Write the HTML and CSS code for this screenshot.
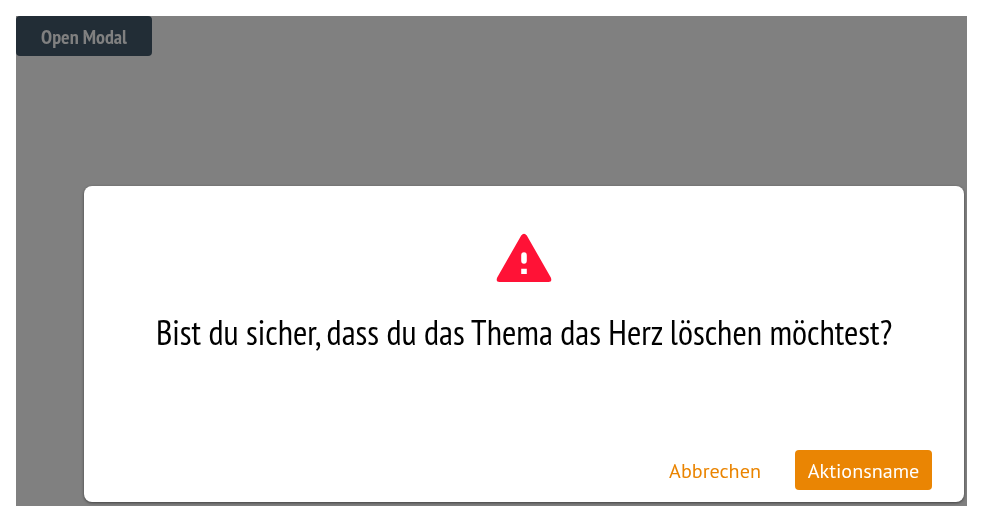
FILE: index.html
```html
<!DOCTYPE html>
<html lang="de">
<head>
<meta charset="utf-8">
<title>Modal</title>
<link rel="stylesheet" href="styles.css">
</head>
<body>
<main class="stage">
  <button class="open">Open Modal</button>
  <section class="modal" role="dialog">
    <svg class="warning" viewBox="0 0 56 50" aria-hidden="true">
      <path fill="#ff1236" fill-rule="evenodd" d="M25.2 2.6Q28-1.2 30.8 2.6L54.8 44.6Q56.5 49 52.5 49H3.5Q-.5 49 1.2 44.6ZM25.2 22.5V27.500a2.800 3.300 0 0 0 5.600 0V22.500a2.800 3.300 0 0 0-5.600 0ZM25.200 35.800V41H30.800V35.800Z"/>
    </svg>
    <h1 class="title">Bist du sicher, dass du das Thema das Herz löschen möchtest?</h1>
    <div class="actions">
      <button class="cancel">Abbrechen</button>
      <button class="action">Aktionsname</button>
    </div>
  </section>
</main>
</body>
</html>
```
FILE: styles.css
```css
* { box-sizing: border-box; }
body { margin: 0; padding: 16px; background: #fff; font-family: "PT Sans", "Noto Sans", sans-serif; -webkit-font-smoothing: antialiased; }
button { border: 0; padding: 0; font: inherit; letter-spacing: inherit; white-space: nowrap; }
.stage { height: 490px; background: #808080; display: flex; flex-direction: column; overflow: hidden; }
.open { width: 136px; height: 40px; padding-top: 1px; border-radius: 4px; background: #222d36; color: #808080; font: bold 20px/40px "PT Sans Narrow", "Open Sans", sans-serif; will-change: transform; }
.modal { width: 880px; height: 316px; margin: 130px 0 0 68px; border-radius: 8px; background: #fff; box-shadow: 0 1px 3px rgba(0,0,0,.5); display: flex; flex-direction: column; align-items: center; padding: 47px 32px 12px; will-change: transform; }
.warning { width: 56px; height: 50px; flex: none; }
.title { margin: 26px 0 0; height: 48px; font: 400 34.78px/48px "PT Sans Narrow", "Open Sans", sans-serif; color: #000; white-space: nowrap; }
.actions { margin-top: auto; width: 100%; display: flex; justify-content: flex-end; gap: 21px; font-size: 20.16px; line-height: 40px; }
.cancel { width: 118px; height: 40px; padding-top: 1px; background: none; color: #ea8400; }
.action { width: 137px; height: 40px; padding-top: 1px; border-radius: 4px; background: #ea8503; color: #fff; }
```
